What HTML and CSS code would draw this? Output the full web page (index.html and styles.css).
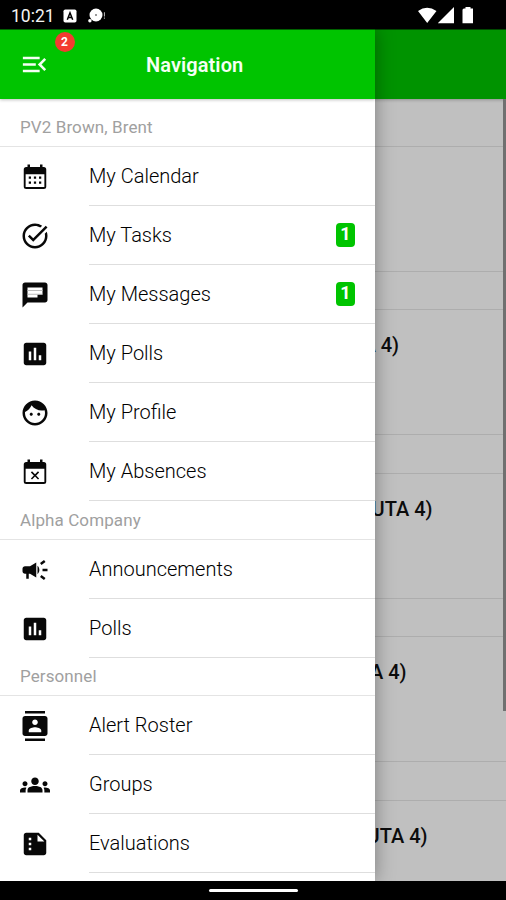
FILE: index.html
```html
<!DOCTYPE html>
<html lang="en">
<head>
<meta charset="utf-8">
<title>Navigation</title>
<link rel="stylesheet" href="styles.css">
</head>
<body>
<div class="phone">
  <div class="status">
    <span class="time">10:21</span>
    <svg class="status-app" viewBox="0 0 14 14"><rect x=".5" y=".5" width="13" height="13" rx="1.8" fill="#fff"/><path d="M4.3 10.8 7 3.8l2.7 7M5.4 8.6h3.2" fill="none" stroke="#000" stroke-width="1.5"/></svg>
    <svg class="status-chat" viewBox="0 0 18 15"><circle cx="8" cy="7" r="6.500" fill="#fff"/><circle cx="8" cy="7" r="1" fill="#777"/><circle cx="1.900" cy="12.800" r="1.700" fill="#fff"/><path d="M15.900 4.200h1.100v4.200h-1.100zM15.900 9.600h1.100v1.200h-1.100z" fill="#aaa"/></svg>
    <svg class="status-signals" viewBox="0 0 58 18"><path d="M1 5Q10-1.500 19.500 5L10.200 17z M21 17.200V17L37 1v16.200z M47 2.500h1.500V1h5v1.500H56v14.700H45.500V4q0-1.500 1.500-1.500z" fill="#fff"/></svg>
  </div>

  <div class="stage">
    <main class="page">
      <div class="page-bar"></div>
      <div class="strip strip-first"></div>
      <div class="event event-first"></div>
      <div class="strip"></div>
      <div class="event end-a">(UTA 4)</div>
      <div class="strip"></div>
      <div class="event end-b">(UTA 4)</div>
      <div class="strip"></div>
      <div class="event end-c">(UTA 4)</div>
      <div class="strip"></div>
      <div class="event end-d">(UTA 4)</div>
      <div class="scrollbar"></div>
    </main>

    <nav class="drawer">
      <header class="bar">
        <svg class="menu" viewBox="0 0 24 24"><path d="M3 18h13v-2H3v2zm0-5h10v-2H3v2zm0-7v2h13V6H3zm18 9.590L17.420 12 21 8.410 19.590 7l-5 5 5 5L21 15.590z"/></svg>
        <span class="count">2</span>
        <h1 class="title">Navigation</h1>
      </header>

      <h2 class="group group-first">PV2 Brown, Brent</h2>
      <a class="item"><svg class="icon" viewBox="0 0 24 24"><path d="M19 4h-1V2h-2v2H8V2H6v2H5a2 2 0 0 0-2 2v13.500a2 2 0 0 0 2 2h14a2 2 0 0 0 2-2V6a2 2 0 0 0-2-2zm.500 15.900H4.500V9.700h15z" fill-rule="evenodd"/><path d="M7 11.500h1.800v1.800H7zm4.100 0h1.800v1.800h-1.800zm4.100 0H17v1.800h-1.800zM7 15.500h1.800v1.800H7zm4.100 0h1.800v1.800h-1.800zm4.100 0H17v1.800h-1.800z"/></svg><span class="label">My Calendar</span></a>
      <a class="item"><svg class="icon" viewBox="0 0 24 24"><path d="M22 5.180 10.590 16.600l-4.240-4.240 1.410-1.410 2.830 2.830 10-10L22 5.180zM19.790 10.220c.130.570.210 1.170.210 1.780 0 4.420-3.580 8-8 8s-8-3.580-8-8 3.580-8 8-8c1.580 0 3.040.460 4.280 1.250l1.440-1.440A9.900 9.900 0 0 0 12 2C6.480 2 2 6.480 2 12s4.480 10 10 10 10-4.480 10-10c0-1.190-.220-2.330-.600-3.390l-1.610 1.610z"/></svg><span class="label">My Tasks</span><span class="tail"><span class="pill">1</span></span></a>
      <a class="item"><svg class="icon" viewBox="0 0 24 24"><path d="M20 2H4c-1.100 0-1.990.900-1.990 2L2 22l4-4h14c1.100 0 2-.900 2-2V4c0-1.100-.900-2-2-2z"/><path class="paper" d="M6 6h12v5.500H6zM6 11.500h8V14H6z"/><path class="faint" d="M6 8h12v.8H6zm0 3h12v.8H6z"/></svg><span class="label">My Messages</span><span class="tail"><span class="pill">1</span></span></a>
      <a class="item"><svg class="icon" viewBox="0 0 24 24"><path d="M19 3H5c-1.100 0-2 .900-2 2v14c0 1.100.900 2 2 2h14c1.100 0 2-.900 2-2V5c0-1.100-.900-2-2-2zM9 17H7v-7h2v7zm4 0h-2V7h2v10zm4 0h-2v-4h2v4z"/></svg><span class="label">My Polls</span></a>
      <a class="item"><svg class="icon" viewBox="0 0 24 24"><path d="M9 11.750c-.690 0-1.250.560-1.250 1.250s.560 1.250 1.250 1.250 1.250-.560 1.250-1.250-.560-1.250-1.250-1.250zm6 0c-.690 0-1.250.560-1.250 1.250s.560 1.250 1.250 1.250 1.250-.560 1.250-1.250-.560-1.250-1.250-1.250zM12 2C6.480 2 2 6.480 2 12s4.480 10 10 10 10-4.480 10-10S17.520 2 12 2zm0 18c-4.410 0-8-3.590-8-8 0-.290.020-.580.050-.860 2.360-1.050 4.230-2.980 5.210-5.370C11.070 8.330 14.050 10 17.420 10c.780 0 1.530-.090 2.250-.260.210.710.330 1.470.330 2.260 0 4.410-3.590 8-8 8z"/></svg><span class="label">My Profile</span></a>
      <a class="item"><svg class="icon" viewBox="0 0 24 24"><path d="M19 4h-1V2h-2v2H8V2H6v2H5a2 2 0 0 0-2 2v13.500a2 2 0 0 0 2 2h14a2 2 0 0 0 2-2V6a2 2 0 0 0-2-2zm.500 15.900H4.500V9.400h15z" fill-rule="evenodd"/><path d="m9.600 18 2.400-2.400 2.400 2.400.900-.900-2.400-2.400 2.400-2.400-.900-.900-2.400 2.400-2.400-2.400-.900.900 2.400 2.400-2.400 2.400z"/></svg><span class="label">My Absences</span></a>

      <h2 class="group">Alpha Company</h2>
      <a class="item"><svg class="icon" viewBox="0 0 24 24"><path d="M18 11v2h4v-2h-4zm-2 6.610c.960.710 2.210 1.650 3.200 2.390.400-.530.800-1.070 1.200-1.600-.990-.740-2.240-1.680-3.200-2.400-.400.540-.800 1.080-1.200 1.610zM20.400 5.600c-.400-.530-.800-1.070-1.200-1.600-.990.740-2.240 1.680-3.200 2.400.400.530.800 1.070 1.200 1.600.960-.720 2.210-1.650 3.200-2.400zM4 9c-1.100 0-2 .900-2 2v2c0 1.100.900 2 2 2h1v4h2v-4h1l5 3V6L8 9H4zm11.500 3c0-1.330-.580-2.530-1.500-3.350v6.690c.920-.810 1.500-2.010 1.500-3.340z"/></svg><span class="label">Announcements</span></a>
      <a class="item"><svg class="icon" viewBox="0 0 24 24"><path d="M19 3H5c-1.100 0-2 .900-2 2v14c0 1.100.900 2 2 2h14c1.100 0 2-.900 2-2V5c0-1.100-.900-2-2-2zM9 17H7v-7h2v7zm4 0h-2V7h2v10zm4 0h-2v-4h2v4z"/></svg><span class="label">Polls</span></a>

      <h2 class="group group-last">Personnel</h2>
      <a class="item"><svg class="icon" viewBox="0 0 24 24"><path d="M20 0H4v2h16V0zM4 24h16v-2H4v2zM20 4H4c-1.100 0-2 .900-2 2v12c0 1.100.900 2 2 2h16c1.100 0 2-.900 2-2V6c0-1.100-.900-2-2-2zm-8 2.750c1.240 0 2.250 1.010 2.250 2.250s-1.010 2.250-2.250 2.250S9.750 10.240 9.750 9 10.760 6.750 12 6.750zM17 17H7v-1.500c0-1.670 3.330-2.500 5-2.500s5 .830 5 2.500V17z"/></svg><span class="label">Alert Roster</span></a>
      <a class="item"><svg class="icon" viewBox="0 0 24 24"><path d="M12 12.750c1.630 0 3.070.390 4.240.900 1.080.480 1.760 1.560 1.760 2.730V18H6v-1.610c0-1.180.680-2.260 1.760-2.730 1.170-.520 2.610-.910 4.240-.910zM4 13c1.100 0 2-.900 2-2s-.900-2-2-2-2 .900-2 2 .900 2 2 2zm1.130 1.100c-.370-.060-.740-.100-1.130-.100-.990 0-1.930.210-2.780.580A2.010 2.010 0 0 0 0 16.430V18h4.500v-1.610c0-.830.230-1.610.630-2.290zM20 13c1.100 0 2-.900 2-2s-.900-2-2-2-2 .900-2 2 .900 2 2 2zm4 3.430c0-.810-.480-1.530-1.220-1.850A6.950 6.950 0 0 0 20 14c-.390 0-.760.040-1.130.100.400.680.630 1.460.630 2.290V18H24v-1.570zM12 6c1.660 0 3 1.340 3 3s-1.340 3-3 3-3-1.340-3-3 1.340-3 3-3z"/></svg><span class="label">Groups</span></a>
      <a class="item"><svg class="icon" viewBox="0 0 24 24"><path d="M15 3H5c-1.100 0-1.990.900-1.990 2L3 19c0 1.100.890 2 1.990 2H19c1.100 0 2-.900 2-2V9l-6-6zm-1 7V4.500l5.500 5.500H14z"/><path class="paper" d="M7 7h2v2H7zm0 4h2v2H7zm0 4h2v2H7z"/></svg><span class="label">Evaluations</span></a>
    </nav>
  </div>

  <footer class="gesture"><div class="handle"></div></footer>
</div>
</body>
</html>
```

FILE: styles.css
```css
* { box-sizing: border-box; }

body {
  margin: 0;
  background: #000;
  font-family: Roboto, "Liberation Sans", sans-serif;
  color: #000;
}

.phone {
  display: flex;
  flex-direction: column;
  width: 506px;
  height: 900px;
  overflow: hidden;
}

.status {
  display: flex;
  flex: 0 0 29px;
  align-items: center;
  padding: 2px 31px 0 11px;
  background: #000;
  color: #fff;
}

.time { width: 52px; padding-top: 1px; font-size: 17.500px; line-height: 26px; color: #f4f4f4; }
.status-app { width: 14px; height: 14px; }
.status-chat { width: 18px; height: 15px; margin-left: 11px; }
.status-signals { width: 58px; height: 18px; margin: -1px 0 0 auto; }

.stage {
  display: grid;
  flex: 0 0 852px;
  grid-template-columns: 506px;
  grid-template-rows: 852px;
  overflow: hidden;
}

.page, .drawer { grid-area: 1 / 1; overflow: hidden; }

.page {
  position: relative;
  display: flex;
  flex-direction: column;
  background: #c0c0c0;
}

.page-bar {
  flex: 0 0 70px;
  border-top: 1px solid #004a00;
  background: #009300;
  box-shadow: 0 1px 3px rgba(0, 0, 0, .25);
}

.strip { flex: 0 0 38.300px; border-bottom: 1px solid #adadad; }
.strip-first { flex-basis: 48px; }

.event {
  flex: 0 0 125.100px;
  padding-top: 22px;
  border-bottom: 1px solid #adadad;
  font-size: 20px;
  font-weight: 500;
  line-height: 26px;
  text-align: right;
  color: #0c0c0c;
}

.end-a { padding-right: 107px; }
.end-b { padding-right: 73.500px; }
.end-c { padding-right: 99.500px; }
.end-d { padding-right: 78.500px; }

.scrollbar {
  position: absolute;
  top: 70px;
  right: 0;
  width: 3px;
  height: 612px;
  background: #707070;
}

.drawer {
  z-index: 1;
  width: 375px;
  background: #fff;
  box-shadow: 0 0 18px rgba(0, 0, 0, .35);
}

.bar {
  position: relative;
  display: flex;
  align-items: center;
  height: 70px;
  padding-left: 19px;
  border-top: 1px solid #006200;
  background: #00c400;
  box-shadow: 0 1px 3px rgba(0, 0, 0, .25);
}

.menu { width: 31px; height: 31px; fill: #f4fff4; }

.count {
  position: absolute;
  top: 2px;
  left: 54.500px;
  width: 20px;
  height: 20px;
  border-radius: 50%;
  background: #f33a30;
  color: #fff;
  font-size: 12px;
  font-weight: 700;
  line-height: 20px;
  text-align: center;
}

.title {
  margin: 0 0 0 96px;
  color: #f4fff4;
  font-size: 20px;
  font-weight: 600;
  letter-spacing: .08px;
  line-height: 28px;
}

.group {
  display: flex;
  align-items: center;
  height: 39px;
  margin: 0;
  padding: 0 0 0 20px;
  border-bottom: 1px solid #e4e4e4;
  color: #a0a0a0;
  font-size: 17px;
  font-weight: 400;
  letter-spacing: .1px;
}

.group-first { height: 48px; padding-top: 9px; }
.group-last { height: 38px; padding-bottom: 1px; }

.item {
  display: grid;
  grid-template-columns: 69px 1fr;
  align-items: center;
  height: 59px;
  padding-left: 20px;
}

.item:has(.pill) { grid-template-columns: 69px 1fr 39px; }

.icon { width: 30px; height: 30px; fill: #080808; }
.icon .paper { fill: #fff; }
.icon .faint { fill: #bbb; }

.label {
  height: 59px;
  border-bottom: 1px solid #dedede;
  font-size: 20px;
  font-weight: 300;
  line-height: 58px;
  white-space: nowrap;
}

.tail {
  height: 59px;
  border-bottom: 1px solid #dedede;
  padding-top: 17px;
}

.pill {
  display: block;
  width: 19px;
  height: 24px;
  border-radius: 4px;
  background: #00c400;
  color: #fff;
  font-size: 18px;
  font-weight: 700;
  line-height: 22px;
  text-align: center;
}

.gesture {
  display: flex;
  flex: 1;
  justify-content: center;
  align-items: center;
  background: #000;
}

.handle { width: 89px; height: 3px; border-radius: 2px; background: #fff; }
```
